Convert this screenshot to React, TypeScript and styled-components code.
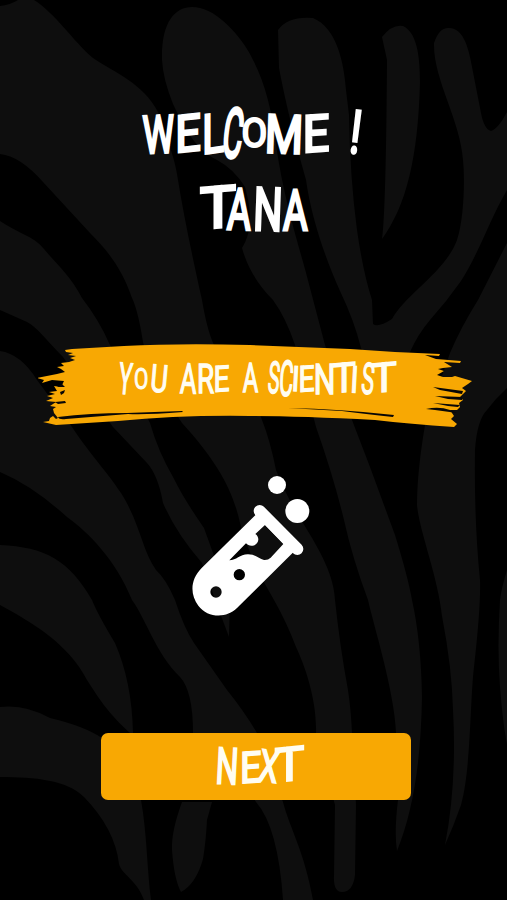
import React from "react";
import styled, { createGlobalStyle } from "styled-components";

const GlobalStyle = createGlobalStyle`
  html, body { margin: 0; padding: 0; background: #000; }
  * { box-sizing: border-box; }
`;

const Screen = styled.main`
  position: relative;
  isolation: isolate;
  width: 507px;
  height: 900px;
  overflow: hidden;
  background: #000;
  color: #fff;
  font-family: Roboto, "Open Sans", sans-serif;
  display: flex;
  flex-direction: column;
  align-items: center;
`;

const Backdrop = styled.svg`
  position: absolute;
  inset: 0;
  z-index: -1;
  fill: #0e0e0e;
`;

const Heading = styled.h1`
  margin: 0;
  padding-top: 98px;
  width: 100%;
  display: flex;
  flex-direction: column;
  font-weight: 400;
`;

const Line = styled.span<{ $start: number; $height: number; $size: number; $stroke: number }>`
  display: block;
  width: 100%;
  height: ${(p) => p.$height}px;
  line-height: ${(p) => p.$height}px;
  padding-left: ${(p) => p.$start}px;
  font-size: ${(p) => p.$size}px;
  white-space: nowrap;
  -webkit-text-stroke: ${(p) => p.$stroke}px currentColor;
`;

const Slot = styled.span<{ $width: number; $gap: number }>`
  display: inline-flex;
  justify-content: center;
  width: ${(p) => p.$width}px;
  margin-left: ${(p) => p.$gap}px;
`;

const Glyph = styled.span<{ $sx: number; $sy: number; $tilt: number; $rise: number; $dy: number }>`
  display: block;
  flex: none;
  transform: translateY(${(p) => p.$dy}px) rotate(${(p) => p.$tilt}deg)
    skewY(${(p) => p.$rise}deg) scale(${(p) => p.$sx}, ${(p) => p.$sy});
`;

const Space = styled.span`
  font-size: 0;
`;

const Banner = styled.section`
  position: relative;
  isolation: isolate;
  width: 434px;
  height: 90px;
  margin: 92px 0 0 3px;
  padding-top: 14px;
  color: #fffdf2;
`;

const Brush = styled.svg`
  position: absolute;
  inset: 0;
  z-index: -1;
`;

const TestTube = styled.svg`
  display: block;
  width: 140px;
  height: 160px;
  margin: 35px 0 0 -7px;
`;

const NextButton = styled.button`
  width: 310px;
  height: 67px;
  margin: 108px 0 0 5px;
  padding: 0;
  border: 0;
  border-radius: 7px;
  background: #f8a803;
  color: #fffdf2;
  font-family: inherit;
  text-align: left;
`;

// Ink width of each capital, in em.
const INK: Record<string, number> = {
  A: 0.64, C: 0.57, E: 0.46, I: 0.1, L: 0.44, M: 0.73, N: 0.56, O: 0.59,
  R: 0.54, S: 0.53, T: 0.58, U: 0.53, W: 0.85, X: 0.6, Y: 0.6, "!": 0.12,
};

// Capitals whose crossbars slope while their stem stays upright.
const SLOPED = "ELT";

// character, width, gap before, vertical scale, tilt, vertical shift
type Letter = [string, number, number, number?, number?, number?];

const WELCOME: Letter[] = [
  ["W", 32, 0, 0.98, -2, 1], ["E", 23, 2, 0.96, -6, 0], ["L", 20, 3, 1.02, -8, 0],
  ["C", 19, 1, 1.3, 7, 0], ["O", 24, -1, 0.76, 0, -1], ["M", 34, 1, 1, 2, 1],
  ["E", 24, 3, 0.96, -4, 0], [" ", 0, 0], ["!", 7, 24, 1.12, 7, -1],
];
const TANA: Letter[] = [
  ["T", 38, 0, 1.08, -5, -1], ["A", 25, -10, 1.08, 2, 1],
  ["N", 25, 3, 1.12, 2, 1], ["A", 26, 2, 1.06, 0, 2],
];
const SCIENTIST: Letter[] = [
  ["Y", 14, 0, 1.06, 5, 0], ["O", 13, 3, 0.72, 0, 0], ["U", 15, 4, 0.93, 5, 0], [" ", 0, 0],
  ["A", 17, 13, 1.02, 2, 0], ["R", 16, 1, 1, 0, 0], ["E", 14, 1, 0.88, -4, 0], [" ", 0, 0],
  ["A", 16, 13, 0.98, 0, -1], [" ", 0, 0],
  ["S", 11, 11, 1.08, 5, -1], ["C", 13, 0, 1.2, 4, 0], ["I", 4, 1, 0.85, 3, 0],
  ["E", 14, 2, 0.88, -4, 0], ["N", 18, 2, 1.04, 0, 0], ["T", 24, -2, 1, -5, -1],
  ["I", 4, -3, 0.9, 3, 1], ["S", 12, 5, 1.06, 5, 0], ["T", 26, -3, 1, -5, -1],
];
const NEXT: Letter[] = [
  ["N", 19, 0, 1.05, 3, 0], ["E", 19, 4, 0.9, -4, 1],
  ["X", 20, -1, 0.92, 8, 0], ["T", 31, -5, 0.98, -6, -2],
];

function Handwriting({ letters, size, height, start, stroke }: {
  letters: Letter[]; size: number; height: number; start: number; stroke: number;
}) {
  return (
    <Line $start={start} $height={height} $size={size} $stroke={stroke}>
      {letters.map(([char, width, gap, sy = 1, angle = 0, dy = 0], i) => {
        if (char === " ") return <Space key={i}> </Space>;
        const sloped = SLOPED.includes(char);
        return (
          <Slot key={i} $width={width} $gap={gap}>
            <Glyph
              $sx={width / (INK[char] * size + stroke)}
              $sy={sy}
              $tilt={sloped ? 0 : angle}
              $rise={sloped ? angle : 0}
              $dy={dy}
            >
              {char}
            </Glyph>
          </Slot>
        );
      })}
    </Line>
  );
}

const STRIPES = [
  "M0 6Q10 5 18 0H34C55 13 73 41 93 58C115 73 143 83 158 112C166 137 174 155 177 174C184 218 194 264 202 300Q207 330 214 345C228 378 250 385 262 420Q270 440 276 470Q288 500 303 523C321 552 334 576 335 600Q340 647 348 690Q351 710 352 733L356 805L355 875Q353 892 342 892Q333 892 334 875L335 805L316 733C317 700 305 666 296 647Q287 623 274 600Q250 560 240 523C233 490 216 460 182 423Q150 375 143 342C139 315 134 302 132 298C121 266 105 248 90 233L43 182Q20 156 0 154Z",
  "M0 221C17 233 34 236 44 249C57 265 70 275 82 298Q99 320 109 343L150 423Q158 451 173 477C183 497 193 512 204 528L230 600L229 637L220 613L202 563Q176 533 163 503Q158 475 147 463L113 427L63 357C46 340 37 327 27 322L0 310Z",
  "M0 351Q21 354 37 380L72 427C92 457 105 469 121 493C140 523 142 550 156 570Q166 579 175 600Q184 628 194 643L227 690Q244 711 257 733L283 802C290 829 304 850 313 900H283Q278 827 256 802L214 733H193Q193 691 180 677C155 652 147 621 132 600C116 560 88 532 67 517Q33 486 0 472Z",
  "M0 545C45 547 69 560 92 600Q98 615 115 643Q132 682 133 733H130C108 713 100 700 87 680C68 643 31 622 0 605Z",
  "M0 707Q25 704 50 718Q84 726 102 738L141 800C147 833 147 869 151 900H144C137 880 121 874 119 864Q115 829 84 797C67 780 35 777 0 777Z",
  "M182 802Q171 832 172 850Q174 879 181 892Q196 884 203 859Q206 841 207 820L212 802Z",
  "M162 60C161 17 179 3 200 8C222 13 245 42 253 60Q270 92 276 145C283 193 294 230 305 269L325 345L352 420L370 467L395 535Q408 577 412 600Q421 640 422 697C421 758 414 809 397 851Q394 832 398 800L396 733C394 690 374 627 368 600Q352 557 344 520Q333 475 316 427L295 345Q286 318 273 300Q250 277 242 248C251 233 253 216 245 187Q234 169 217 160C192 148 180 118 173 104Q163 79 162 60Z",
  "M278 30Q288 16 313 18C337 28 344 63 346 90L349 115Q350 178 357 230Q363 272 372 300L373 324Q378 328 392 319C405 295 446 271 457 240C464 219 465 180 463 160C460 119 433 79 434 43Q439 28 448 28C464 27 469 49 473 72L481 113Q484 129 491 131Q498 129 507 112V190C490 219 479 253 461 281Q447 301 430 320Q418 334 410 352L390 385L375 380L361 348Q354 320 340 291C323 253 311 215 306 180Q288 116 279 68Z",
  "M382 37Q392 24 403 26C416 32 420 53 420 82C418 159 406 206 382 239Q386 208 387 60Z",
  "M507 243L478 300Q461 327 450 353L425 425Q417 472 417 505C419 530 438 577 442 616Q452 668 453 710Q457 783 445 845Q454 825 461 805C471 770 470 700 474 667Q481 605 480 580Q474 520 475 450Q477 420 487 410Q496 398 507 388Z",
  "M507 570Q501 590 500 600Q497 648 500 687Q503 725 507 744Z",
];

export default function App() {
  return (
    <>
      <GlobalStyle />
      <Screen>
        <Backdrop width="507" height="900" viewBox="0 0 507 900" aria-hidden="true">
          {STRIPES.map((d) => <path key={d} d={d} />)}
        </Backdrop>

        <Heading>
          <Handwriting letters={WELCOME} size={53} height={72} start={143} stroke={2.8} />
          <Handwriting letters={TANA} size={53} height={78} start={199} stroke={2.8} />
        </Heading>

        <Banner>
          <Brush width="434" height="90" viewBox="38 340 434 90" aria-hidden="true">
            <path fill="#f8a803" d="M65 350L72 349L124 346Q180 343 250 345L350 349L395 352L440 354L439 356L425 355L436 359L461 361L460 363L444 362L452 367L443 368L438 369L444 371L437 375L443 377L452 377L455 376L472 381L468 384L462 388L466 391L463 394L460 397L463 400L459 403L460 407L457 410L450 410L454 416L451 419L457 424L454 427Q410 424 375 420Q300 416 250 416Q180 415 118 421L56 425L43 422L49 421L50 418L53 416L56 419L58 418L54 413L53 409L56 407L50 406L56 402L46 401L53 398L47 396L55 394L49 392L57 391L54 386L61 387L64 381L52 380L42 383L44 380L37 378L57 374L65 372L61 369L57 367L64 366L61 363L69 362L75 360L70 358L76 356L68 355L73 353L66 352Z" />
            <g fill="#080706">
              <path d="M58 417Q90 413 127 413L182 411L183 412Q145 415 128 414L66 419Q59 420 58 417Z" />
              <path d="M288 408Q340 409 394 415L393 417Q365 414 342 411Z" />
              <path d="M433 387L463 391L462 394L440 390ZM435 396L462 397V400L448 399ZM433 403L460 405L458 407L448 406ZM426 409Q439 406 450 410L457 413L435 410Z" />
              <path d="M60 392L65 390L64 393L61 395ZM55 402L65 401L66 403L58 404ZM57 387L62 384L65 387Z" />
            </g>
          </Brush>
          <Handwriting letters={SCIENTIST} size={41} height={50} start={80} stroke={1.4} />
        </Banner>

        <TestTube viewBox="0 0 420 480" fill="#fff" aria-hidden="true">
          <circle cx="291" cy="60" r="27" />
          <circle cx="352" cy="138" r="36" />
          <path fillRule="evenodd" d="M239 138L65 309C30 344 30 389 55 422C83 459 139 461 171 429L352 250ZM255 180L310 237L272 278Q264 286 252 285C235 281 228 268 204 268C178 269 170 286 148 286L198 235C208 247 233 244 235 224Q235 213 226 207ZM161 329A17 17 0 1 0 195 329A17 17 0 1 0 161 329ZM91 381A17 17 0 1 0 125 381A17 17 0 1 0 91 381Z" />
          <path fill="none" stroke="#fff" strokeWidth="36" strokeLinecap="round" d="M239 138L352 252" />
        </TestTube>

        <NextButton type="button">
          <Handwriting letters={NEXT} size={48} height={64} start={117} stroke={2} />
        </NextButton>
      </Screen>
    </>
  );
}
